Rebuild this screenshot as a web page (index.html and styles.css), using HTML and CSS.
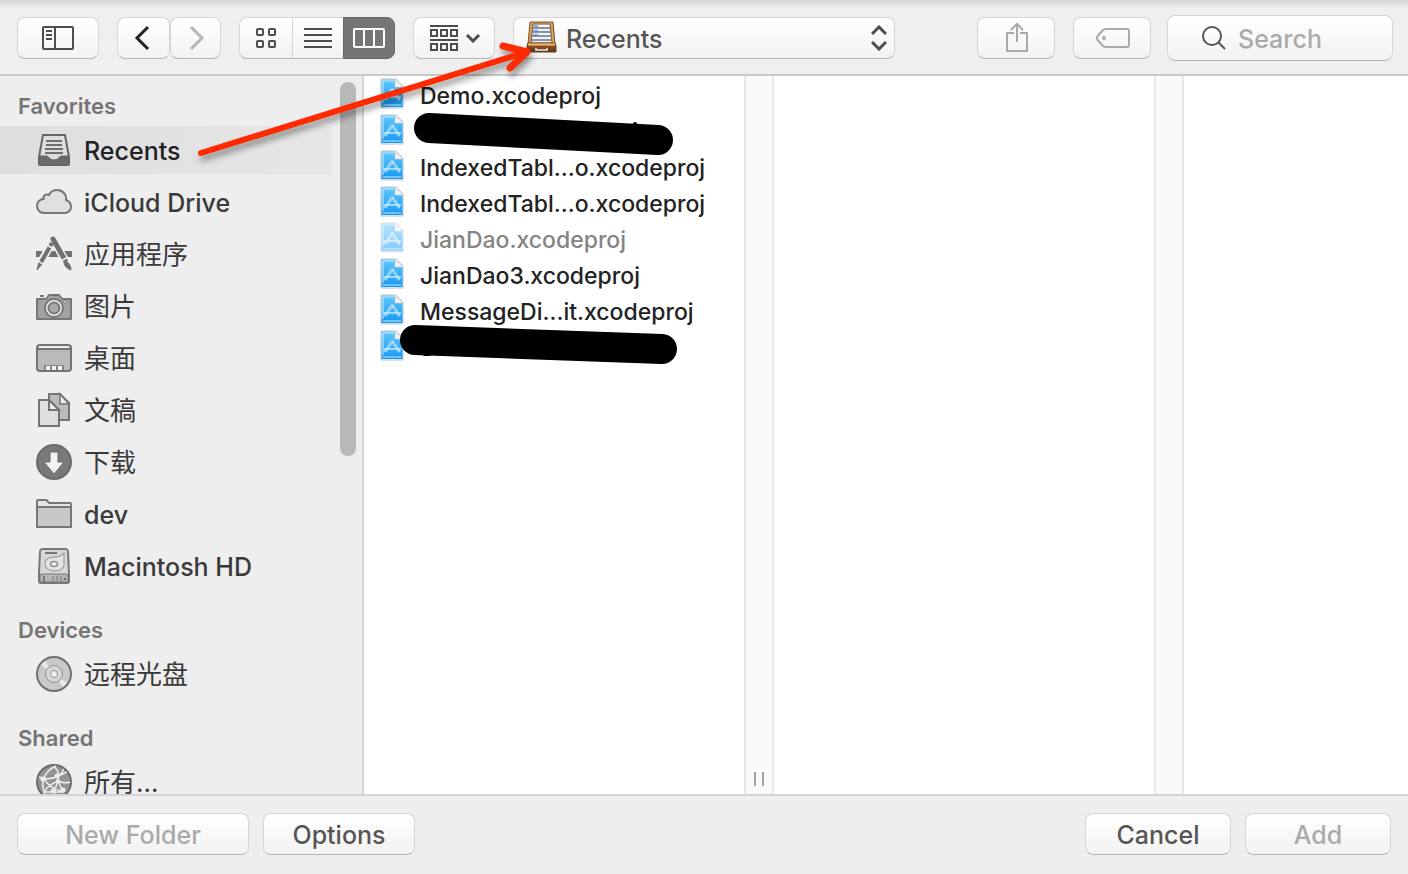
FILE: index.html
```
<!DOCTYPE html>
<html lang="en">
<head>
    <meta charset="utf-8">
    <title>Add Files</title>
    <link rel="stylesheet" href="styles.css">
</head>
<body>
    <svg class="defs" width="0" height="0" aria-hidden="true">
        <defs>
            <linearGradient id="docBlue" x1="0" y1="0" x2="0" y2="1">
                <stop offset="0" stop-color="#62c8f8"/>
                <stop offset="1" stop-color="#1497f5"/>
            </linearGradient>
            <linearGradient id="wood" x1="0" y1="0" x2="0" y2="1">
                <stop offset="0" stop-color="#c98444"/>
                <stop offset="0.3" stop-color="#8f5426"/>
                <stop offset="1" stop-color="#5c3216"/>
            </linearGradient>
            <symbol id="xcodeproj" viewBox="0 0 24 32">
                <path d="M1 1H16L23 8V30H1Z" fill="#fff" stroke="#b9bfc4"/>
                <path d="M1.500 1.500H15V9H22.500V29H1.500Z" fill="url(#docBlue)"/>
                <path d="M3 25V3H14M3 27H21" fill="none" stroke="#c9ecfd"/>
                <path d="M15 1.500V9H22.500Z" fill="#f4f4f4" stroke="#c4cbd0" stroke-width="0.700"/>
                <path d="M5 22L12.500 11M12 11L19.500 22" fill="none" stroke="#c4e9ff" stroke-width="2.600"/>
                <path d="M5.500 21.500L12 12M13 12.500L19 21.500" fill="none" stroke="#3ba9f2" stroke-width="0.800"/>
                <path d="M3.500 19H21" fill="none" stroke="#c4e9ff" stroke-width="1.500"/>
            </symbol>
        </defs>
    </svg>

    <header class="toolbar">
        <button class="btn toggle" aria-label="Toggle sidebar">
            <svg width="32" height="24" fill="none" stroke="#4d4d4d" stroke-width="2">
                <rect x="1" y="1" width="30" height="22" rx="1"/>
                <path d="M13 1V23M4 5H10M4 9H10M4 13H10"/>
            </svg>
        </button>

        <div class="nav">
            <button class="btn back" aria-label="Back">
                <svg width="16" height="26" fill="none" stroke="#222" stroke-width="3"><path d="M14 2L3 13L14 24"/></svg>
            </button>
            <button class="btn forward" aria-label="Forward" disabled>
                <svg width="16" height="26" fill="none" stroke="#b5b5b5" stroke-width="3"><path d="M2 2L13 13L2 24"/></svg>
            </button>
        </div>

        <div class="views">
            <button class="btn" aria-label="Icon view">
                <svg width="20" height="20" fill="none" stroke="#4d4d4d" stroke-width="2">
                    <rect x="1" y="1" width="6" height="6" rx="1"/>
                    <rect x="13" y="1" width="6" height="6" rx="1"/>
                    <rect x="1" y="13" width="6" height="6" rx="1"/>
                    <rect x="13" y="13" width="6" height="6" rx="1"/>
                </svg>
            </button>
            <button class="btn" aria-label="List view">
                <svg width="28" height="20" stroke="#4d4d4d" stroke-width="2"><path d="M0 1H28M0 7H28M0 13H28M0 19H28"/></svg>
            </button>
            <button class="btn active" aria-label="Column view" aria-pressed="true">
                <svg width="32" height="20" fill="none" stroke="#fff" stroke-width="2">
                    <rect x="1" y="1" width="30" height="18" rx="1"/>
                    <path d="M11 1V19M21 1V19"/>
                </svg>
            </button>
        </div>

        <button class="btn group" aria-label="Group items">
            <svg width="28" height="26" fill="none" stroke="#4d4d4d" stroke-width="2">
                <path d="M0 1H28M0 15H28"/>
                <rect x="1" y="5" width="6" height="6"/>
                <rect x="11" y="5" width="6" height="6"/>
                <rect x="21" y="5" width="6" height="6"/>
                <rect x="1" y="19" width="6" height="6"/>
                <rect x="11" y="19" width="6" height="6"/>
                <rect x="21" y="19" width="6" height="6"/>
            </svg>
            <svg width="16" height="10" fill="none" stroke="#4d4d4d" stroke-width="3"><path d="M2 2L8 8L14 2"/></svg>
        </button>

        <div class="path">
            <svg class="path-icon" width="32" height="32">
                <path d="M4 1H27L29 23H2Z" fill="#d9a25c" stroke="#7b5228"/>
                <path d="M7 3H24L26 22H5Z" fill="#f1f3f7" stroke="#7d5a30"/>
                <path d="M7 7H24M7 11H25M6 15H25M6 19H25" stroke="#66748f" stroke-width="1.500"/>
                <path d="M8 5H12M7 10H12M7 14H12" stroke="#5b8bd6" stroke-width="1.500"/>
                <path d="M2 22H29L30 25V31H1V25Z" fill="url(#wood)" stroke="#6b401c"/>
                <path d="M2 23.500H29" stroke="#f0b56c" stroke-width="2"/>
                <path d="M10 27V29H21V27" fill="none" stroke="#eee" stroke-width="1.500"/>
            </svg>
            <select class="btn" aria-label="Location">
                <option>Recents</option>
            </select>
            <svg class="path-arrows" width="16" height="26" fill="none" stroke="#4d4d4d" stroke-width="3">
                <path d="M1 9L8 2L15 9M1 17L8 24L15 17"/>
            </svg>
        </div>

        <div class="actions">
            <button class="btn" aria-label="Share" disabled>
                <svg width="24" height="32" fill="none" stroke="#aaa" stroke-width="2">
                    <path d="M9 11H2V29H22V11H15M12 20V2M6 8L12 2L18 8"/>
                </svg>
            </button>
            <button class="btn" aria-label="Edit tags" disabled>
                <svg width="34" height="20" fill="none" stroke="#aaa" stroke-width="2">
                    <path d="M10 1H31Q33 1 33 3V17Q33 19 31 19H10Q8 19 6.500 17.500L2 12.500Q0 10 2 7.500L6.500 2.500Q8 1 10 1Z"/>
                    <circle cx="8" cy="10" r="2" fill="#aaa" stroke="none"/>
                </svg>
            </button>
        </div>

        <label class="btn search">
            <svg width="24" height="24" fill="none" stroke="#555" stroke-width="2">
                <circle cx="10" cy="10" r="9"/>
                <path d="M16 16L23 23"/>
            </svg>
            <input type="text" placeholder="Search" aria-label="Search">
        </label>
    </header>

    <main class="browser">
        <nav class="sidebar">
            <div class="places">
                <h2>Favorites</h2>
                <ul>
                    <li><a class="selected" href="#">
                        <svg width="36" height="36">
                            <path d="M7 3H29L33 25V32Q33 33 32 33H4Q3 33 3 32V25Z" fill="#dedede" stroke="#666" stroke-width="2"/>
                            <path d="M10 9H26M10 13H26M9 17H27M9 21H27" stroke="#6e6e6e" stroke-width="2"/>
                            <path d="M3 24H10Q12 24 12.500 25Q14 28 18 28Q22 28 23.500 25Q24 24 26 24H33V33H3Z" fill="#6a6a6a" stroke="#666"/>
                        </svg>
                        <span>Recents</span></a></li>
                    <li><a href="#">
                        <svg width="36" height="36">
                            <path d="M8 29C4 29 1 26 1 22C1 18 4 15 7.500 15C6.500 12 10 9.500 13 11C15 7 18 6 21 6C27 6 31 11 30 16C33 17 35 19.500 35 23C35 26.500 32 29 29 29Z" fill="#e0e0e0" stroke="#777" stroke-width="2"/>
                        </svg>
                        <span>iCloud Drive</span></a></li>
                    <li><a href="#">
                        <svg width="36" height="36" fill="none" stroke="#707070">
                            <path d="M0 18H36" stroke-width="6"/>
                            <path d="M16 6L4 28M18 5L30 26" stroke="#eee" stroke-width="8"/>
                            <path d="M16 7L4 28" stroke-width="4"/>
                            <path d="M3 26L6 28L1 34Z" fill="#707070" stroke-width="1"/>
                            <path d="M17 3L29 24" stroke-width="5" stroke-linecap="round"/>
                            <path d="M29 25Q35 27 35 34Q29 32 28 27Z" fill="#707070" stroke-width="1"/>
                            <path d="M11 9L16 12M2 25L7 28M25 25L32 21" stroke="#eee" stroke-width="1.500"/>
                        </svg>
                        <span lang="zh">应用程序</span></a></li>
                    <li><a href="#">
                        <svg width="36" height="36" stroke="#777">
                            <path d="M4 8H8" stroke-width="2"/>
                            <path d="M1 11H10L13 7H23L26 11H35V31H1Z" fill="#a2a2a2" stroke-width="2" stroke-linejoin="round"/>
                            <circle cx="18" cy="20" r="9" fill="#eee" stroke-width="2"/>
                            <circle cx="18" cy="20" r="5.500" fill="#aaa" stroke-width="2"/>
                            <circle cx="29" cy="14" r="1.500" fill="#eee"/>
                        </svg>
                        <span lang="zh">图片</span></a></li>
                    <li><a href="#">
                        <svg width="36" height="36">
                            <rect x="1" y="5" width="34" height="26" rx="3" fill="#bababa" stroke="#747474" stroke-width="2"/>
                            <path d="M3 7H33" stroke="#eee" stroke-width="2"/>
                            <path d="M2 9H34" stroke="#747474" stroke-width="2"/>
                            <rect x="8" y="25" width="20" height="5" fill="#858585"/>
                            <path d="M10 26H14V30H10ZM16 26H20V30H16ZM22 26H26V30H22Z" fill="#f2f2f2"/>
                        </svg>
                        <span lang="zh">桌面</span></a></li>
                    <li><a href="#">
                        <svg width="36" height="36" stroke="#747474" stroke-width="2">
                            <path d="M13 2H24L33 11V28H13Z" fill="#bcbcbc"/>
                            <path d="M24 2V12H33Z" fill="#eee" stroke-width="1.500"/>
                            <path d="M3 8H13L23 18V34H3Z" fill="#dfdfdf"/>
                            <path d="M13 8V18H23Z" fill="#eee"/>
                        </svg>
                        <span lang="zh">文稿</span></a></li>
                    <li><a href="#">
                        <svg width="36" height="36">
                            <circle cx="18" cy="18" r="17" fill="#797979" stroke="#6b6b6b" stroke-width="2"/>
                            <path d="M14 8H22V18H28L18 30L8 18H14Z" fill="#f2f2f2" stroke="#6b6b6b"/>
                        </svg>
                        <span lang="zh">下载</span></a></li>
                    <li><a href="#">
                        <svg width="36" height="36" stroke="#777" stroke-width="2" stroke-linejoin="round">
                            <path d="M1 31V5Q1 4 2 4H10Q11 4 13 7H34Q35 7 35 8V31Z" fill="#e5e5e5"/>
                            <path d="M1 11H35V31H1Z" fill="#c8c8c8"/>
                        </svg>
                        <span>dev</span></a></li>
                    <li><a href="#">
                        <svg width="36" height="36">
                            <path d="M6 1H30Q31 1 32 3L33 26V33Q33 35 31 35H5Q3 35 3 33V26L4 3Q5 1 6 1Z" fill="#d8d8d8" stroke="#777" stroke-width="2"/>
                            <path d="M9 5H21" stroke="#777" stroke-width="2"/>
                            <path d="M28 5V17Q27 23 18 23Q9 22 9 16Q9 9 19 9Q24 9 28 5Z" fill="#e4e4e4" stroke="#aaa" stroke-width="1.500"/>
                            <ellipse cx="18" cy="16" rx="3.500" ry="2.500" fill="#eee" stroke="#909090" stroke-width="1.500"/>
                            <path d="M4 28Q4 26 6 26H30Q32 26 32 28V34H4Z" fill="#b5b5b5" stroke="#777"/>
                            <path d="M8 28V34" stroke="#777" stroke-width="2"/>
                            <path d="M17 28V34M21 28V34M25 28V34" stroke="#8c8c8c" stroke-width="1.500"/>
                            <path d="M28 31H30" stroke="#666" stroke-width="2"/>
                        </svg>
                        <span>Macintosh HD</span></a></li>
                </ul>
                <h2>Devices</h2>
                <ul>
                    <li><a href="#">
                        <svg width="36" height="36">
                            <circle cx="18" cy="18" r="17" fill="#c9c9c9" stroke="#707070" stroke-width="2"/>
                            <path d="M18 18L5 9L9 5ZM18 18L31 27L27 31Z" fill="#e8e8e8"/>
                            <circle cx="18" cy="18" r="8.500" fill="#d6d6d6" stroke="#919191"/>
                            <circle cx="18" cy="18" r="3.500" fill="#eee" stroke="#919191"/>
                        </svg>
                        <span lang="zh">远程光盘</span></a></li>
                </ul>
                <h2>Shared</h2>
                <ul>
                    <li><a href="#">
                        <svg width="36" height="36">
                            <circle cx="18" cy="18" r="17" fill="#949494" stroke="#6c6c6c" stroke-width="2"/>
                            <path d="M20 2Q11 6 8 14Q5 20 9 30M3 13Q13 17 22 12Q28 8 27 5M18 3Q24 7 22 17Q19 23 18 34M8 14Q12 24 28 28M22 17Q29 20 34 18M22 17Q12 21 8 28H28M22 12L31 8M22 17L27 28" fill="none" stroke="#eee" stroke-width="1.500"/>
                            <g fill="#eee">
                                <circle cx="7" cy="15" r="2.500"/>
                                <circle cx="21" cy="12" r="2.500"/>
                                <circle cx="22" cy="17" r="2"/>
                                <circle cx="17" cy="27" r="2.500"/>
                                <circle cx="27" cy="26" r="2.500"/>
                            </g>
                        </svg>
                        <span lang="zh">所有...</span></a></li>
                </ul>
            </div>
            <div class="scrollbar"><div class="thumb"></div></div>
        </nav>

        <ul class="column files">
            <li><a href="#"><svg width="24" height="32"><use href="#xcodeproj"/></svg><span>Demo.xcodeproj</span></a></li>
            <li><a href="#" aria-label="Hidden file"><svg width="24" height="32"><use href="#xcodeproj"/></svg></a>
                <svg class="marker marker-top" width="262" height="48">
                    <path d="M16 17L245 29" stroke="#000" stroke-width="30" stroke-linecap="round"/>
                    <circle cx="222" cy="13" r="2"/>
                </svg>
            </li>
            <li><a href="#"><svg width="24" height="32"><use href="#xcodeproj"/></svg><span>IndexedTabl...o.xcodeproj</span></a></li>
            <li><a href="#"><svg width="24" height="32"><use href="#xcodeproj"/></svg><span>IndexedTabl...o.xcodeproj</span></a></li>
            <li><a class="dimmed" href="#"><svg width="24" height="32"><use href="#xcodeproj"/></svg><span>JianDao.xcodeproj</span></a></li>
            <li><a href="#"><svg width="24" height="32"><use href="#xcodeproj"/></svg><span>JianDao3.xcodeproj</span></a></li>
            <li><a href="#"><svg width="24" height="32"><use href="#xcodeproj"/></svg><span>MessageDi...it.xcodeproj</span></a></li>
            <li><a href="#" aria-label="Hidden file"><svg width="24" height="32"><use href="#xcodeproj"/></svg></a>
                <svg class="marker marker-bottom" width="280" height="44">
                    <path d="M16 16L263 25" stroke="#000" stroke-width="30" stroke-linecap="round"/>
                    <ellipse cx="28" cy="30" rx="5" ry="2"/>
                </svg>
            </li>
        </ul>
        <div class="splitter"><span class="grip"></span></div>
        <div class="column"></div>
        <div class="splitter"></div>
        <div class="rest"></div>
    </main>

    <footer class="footer">
        <button class="btn new-folder" disabled>New Folder</button>
        <button class="btn options">Options</button>
        <button class="btn cancel">Cancel</button>
        <button class="btn add" disabled>Add</button>
    </footer>

    <svg class="arrow" width="350" height="140" fill="none" stroke="#ff2a00" stroke-linecap="round" stroke-linejoin="round">
        <path d="M11 123L330 24" stroke-width="6"/>
        <path d="M313 16L337 22L320 38" stroke-width="7"/>
    </svg>
</body>
</html>
```
FILE: styles.css
```
* {
    box-sizing: border-box;
}
body {
    margin: 0;
    height: 100vh;
    display: flex;
    flex-direction: column;
    position: relative;
    overflow: hidden;
    font-family: Inter, "Noto Sans CJK SC", sans-serif;
    font-size: 25px;
    font-weight: 500;
    color: #3a3a3a;
    background-color: #eee;
}
svg {
    display: block;
    flex-shrink: 0;
}
.defs {
    position: absolute;
}
ul {
    list-style: none;
    margin: 0;
    padding: 0;
}
a {
    color: inherit;
    text-decoration: none;
}

/* buttons */
.btn {
    display: flex;
    align-items: center;
    justify-content: center;
    height: 42px;
    padding: 0;
    font: inherit;
    color: #555;
    background: linear-gradient(#fff, #f2f2f2);
    border: 1px solid #d6d6d6;
    border-bottom-color: #b4b4b4;
    border-radius: 8px;
}
.btn:disabled {
    color: #aaa;
}

/* toolbar */
.toolbar {
    display: flex;
    align-items: center;
    gap: 18px;
    height: 76px;
    flex-shrink: 0;
    padding: 2px 15px 0 17px;
    background: linear-gradient(#d4d4d4, #efefef 8px);
    border-bottom: 2px solid #c9c9c9;
}
.toggle {
    width: 82px;
}
.nav {
    display: flex;
}
.back {
    width: 53px;
    padding-right: 4px;
}
.forward {
    width: 51px;
    padding-left: 2px;
}
.views {
    display: flex;
}
.views .btn {
    width: 52px;
    border-radius: 0;
}
.views .btn:first-child {
    width: 54px;
    border-radius: 8px 0 0 8px;
}
.views .btn:nth-child(2) {
    width: 50px;
    border-left: none;
    border-right: none;
}
.views .btn:last-child {
    border-radius: 0 8px 8px 0;
}
.views .active {
    background: #757575;
    border-color: #666;
}
.group {
    width: 82px;
    padding-left: 2px;
    gap: 7px;
}
.path {
    flex: 1;
    position: relative;
    max-width: 382px;
}
.path select {
    appearance: none;
    width: 100%;
    padding-top: 2px;
    padding-left: 52px;
}
.path-icon {
    position: absolute;
    left: 13px;
    top: 4px;
}
.path-arrows {
    position: absolute;
    right: 8px;
    top: 8px;
}
.actions {
    display: flex;
    gap: 18px;
    margin-left: auto;
}
.actions .btn {
    width: 78px;
    padding-left: 2px;
}
.search {
    width: 226px;
    height: 46px;
    margin-left: -2px;
    padding-left: 34px;
    gap: 12px;
}
.search input {
    flex: 1;
    min-width: 0;
    padding: 2px 0 0;
    font: inherit;
    border: none;
    outline: none;
    background: none;
}
.search input::placeholder {
    color: #aaa;
}

/* browser */
.browser {
    flex: 1;
    min-height: 0;
    display: flex;
    background-color: #fff;
}
.sidebar {
    display: flex;
    width: 364px;
    flex-shrink: 0;
    overflow: hidden;
    background-color: #eee;
    border-right: 2px solid #d4d4d4;
}
.places {
    flex: 1;
    padding-top: 10px;
}
.places h2 {
    margin: 0;
    padding-left: 18px;
    font-size: 22px;
    font-weight: 600;
    line-height: 40px;
    color: #757575;
}
.places ul {
    display: flex;
    flex-direction: column;
    gap: 4px;
    margin-bottom: 20px;
}
.places a {
    display: flex;
    align-items: center;
    gap: 12px;
    height: 48px;
    padding-left: 36px;
}
.places span {
    padding-top: 2px;
    line-height: 40px;
}
.places span:lang(zh) {
    font-size: 26px;
    font-weight: 400;
}
.places .selected {
    color: #222;
    background: linear-gradient(90deg, #dedede, #e6e6e6);
}
.scrollbar {
    width: 30px;
    padding: 6px 6px 6px 8px;
}
.thumb {
    height: 53%;
    border-radius: 8px;
    background-color: #b8b8b8;
}
.column {
    width: 380px;
    flex-shrink: 0;
}
.files {
    font-size: 23px;
    color: #222;
}
.files li {
    position: relative;
}
.files a {
    display: flex;
    align-items: center;
    gap: 16px;
    height: 36px;
    padding-left: 16px;
}
.files span {
    padding-top: 3px;
}
.files .dimmed {
    color: #848484;
}
.dimmed svg {
    opacity: 0.5;
}
.marker {
    position: absolute;
    left: 49px;
    top: -1px;
}
.marker-bottom {
    left: 35px;
    top: -4px;
}
.splitter {
    display: flex;
    align-items: flex-end;
    justify-content: center;
    width: 30px;
    flex-shrink: 0;
    padding-bottom: 8px;
    background-color: #fafafa;
    border-left: 2px solid #e8e8e8;
    border-right: 2px solid #e8e8e8;
}
.grip {
    width: 10px;
    height: 14px;
    border-left: 2px solid #a2a2a2;
    border-right: 2px solid #a2a2a2;
}
.rest {
    flex: 1;
}

/* footer */
.footer {
    display: flex;
    gap: 14px;
    flex-shrink: 0;
    padding: 17px 17px 19px;
    border-top: 2px solid #d4d4d4;
}
.footer .btn {
    padding-top: 2px;
}
.new-folder {
    width: 232px;
}
.options {
    width: 152px;
}
.cancel,
.add {
    width: 146px;
}
.cancel {
    margin-left: auto;
}

/* arrow drawn over the window */
.arrow {
    position: absolute;
    left: 190px;
    top: 30px;
    pointer-events: none;
    filter: drop-shadow(2px 5px 3px rgba(0,0,0,0.4));
}
```
